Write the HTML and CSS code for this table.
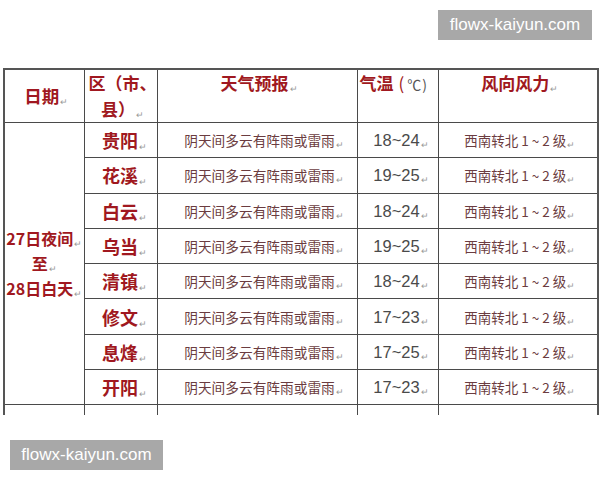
FILE: index.html
```html
<!DOCTYPE html>
<html lang="zh">
<head>
<meta charset="utf-8">
<link rel="stylesheet" href="styles.css">
</head>
<body>
<div class="page">
  <div class="clip">
    <table class="wx">
      <colgroup>
        <col class="c1"><col class="c2"><col class="c3"><col class="c4"><col class="c5">
      </colgroup>
      <thead>
        <tr class="head">
          <th class="mid">日期<span class="pm">↵</span></th>
          <th>区（市、县）<span class="pm">↵</span></th>
          <th>天气预报<span class="pm">↵</span></th>
          <th class="left">气温<span class="paren">(</span><span class="unit">℃)</span></th>
          <th>风向风力<span class="pm">↵</span></th>
        </tr>
      </thead>
      <tbody>
        <tr>
          <td rowspan="8" class="date">27日夜间<span class="pm">↵</span><br>至<span class="pm">↵</span><br>28日白天<span class="pm">↵</span></td>
          <td class="dist">贵阳<span class="pm">↵</span></td>
          <td class="desc">阴天间多云有阵雨或雷雨<span class="pm">↵</span></td>
          <td class="temp">18~24<span class="pm">↵</span></td>
          <td class="wind">西南转北 1 ~ 2 级<span class="pm">↵</span></td>
        </tr>
        <tr>
          <td class="dist">花溪<span class="pm">↵</span></td>
          <td class="desc">阴天间多云有阵雨或雷雨<span class="pm">↵</span></td>
          <td class="temp">19~25<span class="pm">↵</span></td>
          <td class="wind">西南转北 1 ~ 2 级<span class="pm">↵</span></td>
        </tr>
        <tr>
          <td class="dist">白云<span class="pm">↵</span></td>
          <td class="desc">阴天间多云有阵雨或雷雨<span class="pm">↵</span></td>
          <td class="temp">18~24<span class="pm">↵</span></td>
          <td class="wind">西南转北 1 ~ 2 级<span class="pm">↵</span></td>
        </tr>
        <tr>
          <td class="dist">乌当<span class="pm">↵</span></td>
          <td class="desc">阴天间多云有阵雨或雷雨<span class="pm">↵</span></td>
          <td class="temp">19~25<span class="pm">↵</span></td>
          <td class="wind">西南转北 1 ~ 2 级<span class="pm">↵</span></td>
        </tr>
        <tr>
          <td class="dist">清镇<span class="pm">↵</span></td>
          <td class="desc">阴天间多云有阵雨或雷雨<span class="pm">↵</span></td>
          <td class="temp">18~24<span class="pm">↵</span></td>
          <td class="wind">西南转北 1 ~ 2 级<span class="pm">↵</span></td>
        </tr>
        <tr>
          <td class="dist">修文<span class="pm">↵</span></td>
          <td class="desc">阴天间多云有阵雨或雷雨<span class="pm">↵</span></td>
          <td class="temp">17~23<span class="pm">↵</span></td>
          <td class="wind">西南转北 1 ~ 2 级<span class="pm">↵</span></td>
        </tr>
        <tr>
          <td class="dist">息烽<span class="pm">↵</span></td>
          <td class="desc">阴天间多云有阵雨或雷雨<span class="pm">↵</span></td>
          <td class="temp">17~25<span class="pm">↵</span></td>
          <td class="wind">西南转北 1 ~ 2 级<span class="pm">↵</span></td>
        </tr>
        <tr>
          <td class="dist">开阳<span class="pm">↵</span></td>
          <td class="desc">阴天间多云有阵雨或雷雨<span class="pm">↵</span></td>
          <td class="temp">17~23<span class="pm">↵</span></td>
          <td class="wind">西南转北 1 ~ 2 级<span class="pm">↵</span></td>
        </tr>
        <tr>
          <td></td><td></td><td></td><td></td><td></td>
        </tr>
      </tbody>
    </table>
  </div>
  <div class="mark mark-top">flowx-kaiyun.com</div>
  <div class="mark mark-bottom">flowx-kaiyun.com</div>
</div>
</body>
</html>
```

FILE: styles.css
```css
html, body {
  margin: 0;
  padding: 0;
  background: #fff;
}
.page {
  position: relative;
  width: 600px;
  height: 480px;
  overflow: hidden;
  font-family: "Noto Sans CJK SC", "Noto Sans", sans-serif;
}
.clip {
  padding-top: 68px;
  padding-left: 3px;
  height: 347px;
  overflow: hidden;
}
.wx {
  border-collapse: collapse;
  table-layout: fixed;
  width: 594px;
  border: 2px solid #555;
}
.c1 { width: 80px; }
.c2 { width: 73px; }
.c3 { width: 200px; }
.c4 { width: 81px; }
.c5 { width: 160px; }
.wx th, .wx td {
  border: 1.5px solid #4a4a4a;
  padding: 0;
  text-align: center;
}
.head th {
  height: 52px;
  vertical-align: top;
  color: #a01820;
  font-weight: 700;
  font-size: 17px;
  line-height: 26px;
  padding-top: 0;
  padding-left: 4px;
  overflow: hidden;
}
.head th.mid { vertical-align: middle; font-size: 17.5px; }
.head th.left {
  text-align: left;
  padding-left: 2px;
  white-space: nowrap;
}
.paren {
  margin: 0 3px 0 5px;
  font-weight: 400;
}
.unit {
  color: #555;
  font-weight: 400;
  font-size: 14px;
  letter-spacing: 1px;
}
.pm {
  color: #999;
  font-size: 9px;
  font-weight: 400;
  line-height: 0;
  vertical-align: -2px;
  margin-left: 1px;
}
.wx tbody td {
  height: 34.3px;
  line-height: 20px;
  overflow: hidden;
}
.date {
  color: #a01820;
  font-weight: 700;
  font-size: 16px;
  vertical-align: middle;
}
.wx tbody td.date { line-height: 25px; }
.dist {
  color: #a01820;
  font-weight: 700;
  font-size: 18px;
}
.wx tbody td.dist { padding-left: 8px; }
.wx tbody td.desc {
  color: #6b3c40;
  font-size: 13.7px;
  padding-left: 14px;
}
.wx tbody td.temp {
  color: #4a4a4a;
  font-size: 16.5px;
  font-family: "Liberation Sans", Arial, sans-serif;
  padding-left: 7px;
}
.wx tbody td.wind {
  color: #6b3c40;
  font-size: 13.5px;
  padding-left: 4px;
}
.mark {
  position: absolute;
  background: #a8a8a8;
  color: #fff;
  font-family: "Liberation Sans", Arial, sans-serif;
  font-size: 17px;
  line-height: 30px;
  height: 30px;
  padding: 0 10px;
  box-sizing: border-box;
  text-align: center;
}
.mark-top { left: 438px; top: 10px; width: 154px; }
.mark-bottom { left: 10px; top: 440px; width: 153px; }
```
